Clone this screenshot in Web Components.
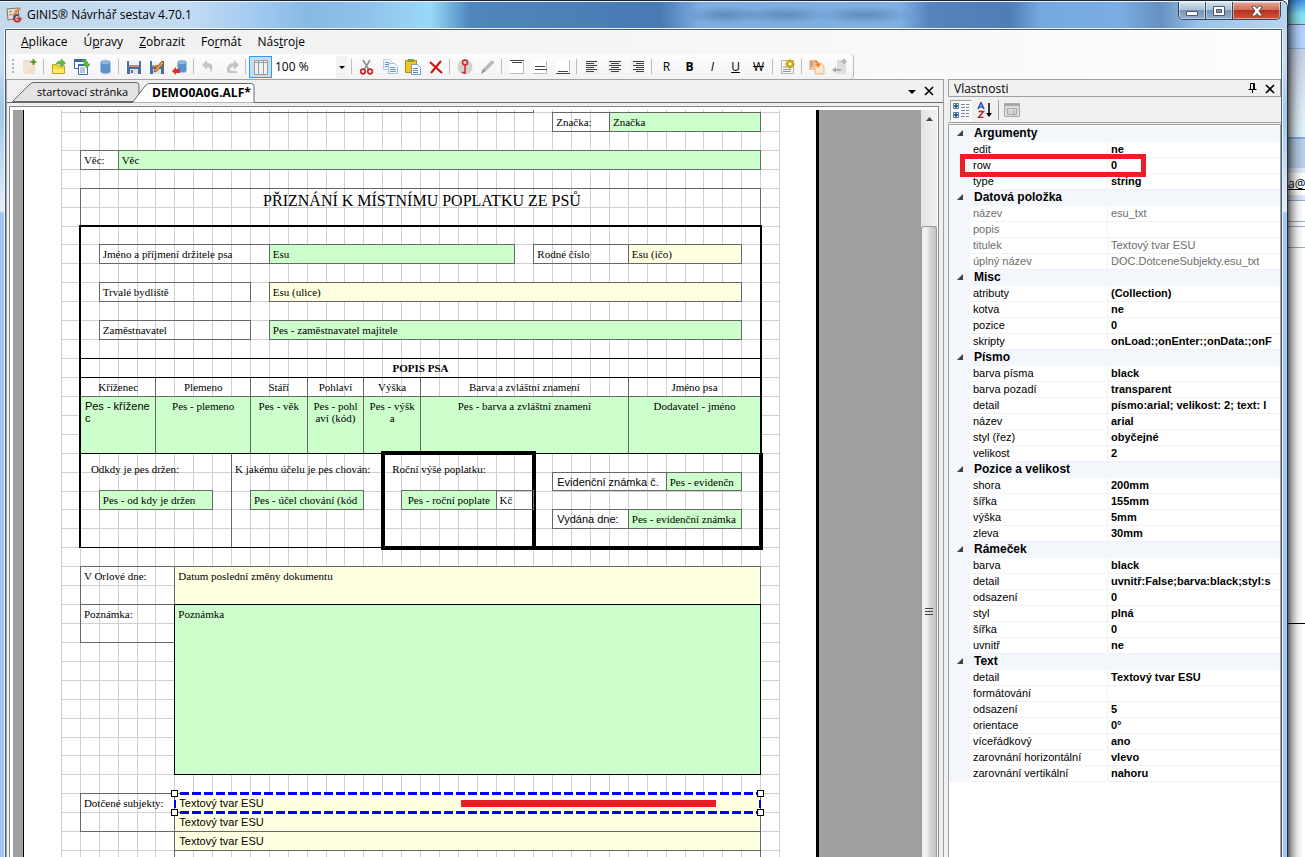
<!DOCTYPE html>
<html lang="cs">
<head>
<meta charset="utf-8">
<title>GINIS® Návrhář sestav 4.70.1</title>
<style>
  html, body { margin: 0; height: 100%; overflow: hidden; }
  body { display: flex; background: #fff; color: #000; font: 11px/16px "Open Sans", "Noto Sans", sans-serif; }
</style>
</head>
<body>
<app-window caption="GINIS® Návrhář sestav 4.70.1">
  <menu-bar slot="menu"></menu-bar>
  <tool-bar slot="tools"></tool-bar>
  <editor-pane>
    <report-page>
      <report-field at="1 -1 5 0" class="cut"></report-field>
      <report-field at="5 -1 25 0" class="cut"></report-field>
      <report-field at="26 0 29 1">Značka:</report-field>
      <report-field at="29 0 37 1" class="green">Značka</report-field>
      <report-field at="1 2 3 3">Věc:</report-field>
      <report-field at="3 2 37 3" class="green">Věc</report-field>
      <report-field at="1 4 37 6" class="heading">PŘIZNÁNÍ K MÍSTNÍMU POPLATKU ZE PSŮ</report-field>
      <report-field at="2 7 11 8">Jméno a příjmení držitele psa</report-field>
      <report-field at="11 7 24 8" class="green">Esu</report-field>
      <report-field at="25 7 30 8">Rodné číslo</report-field>
      <report-field at="30 7 36 8" class="yellow">Esu (ičo)</report-field>
      <report-field at="2 9 10 10">Trvalé bydliště</report-field>
      <report-field at="11 9 36 10" class="yellow">Esu (ulice)</report-field>
      <report-field at="2 11 10 12">Zaměstnavatel</report-field>
      <report-field at="11 11 36 12" class="green">Pes - zaměstnavatel majitele</report-field>

      <report-field at="1 14 5 15" class="center">Kříženec</report-field>
      <report-field at="5 14 10 15" class="center">Plemeno</report-field>
      <report-field at="10 14 13 15" class="center">Stáří</report-field>
      <report-field at="13 14 16 15" class="center">Pohlaví</report-field>
      <report-field at="16 14 19 15" class="center">Výška</report-field>
      <report-field at="19 14 30 15" class="center">Barva a zvláštní znamení</report-field>
      <report-field at="30 14 37 15" class="center">Jméno psa</report-field>
      <report-field at="1 15 5 18" class="green sans">Pes - křížene<br>c</report-field>
      <report-field at="5 15 10 18" class="green center">Pes - plemeno</report-field>
      <report-field at="10 15 13 18" class="green center">Pes - věk</report-field>
      <report-field at="13 15 16 18" class="green center">Pes - pohl<br>aví (kód)</report-field>
      <report-field at="16 15 19 18" class="green center">Pes - výšk<br>a</report-field>
      <report-field at="19 15 30 18" class="green center">Pes - barva a zvláštní znamení</report-field>
      <report-field at="30 15 37 18" class="green center">Dodavatel - jméno</report-field>
      <report-field at="1 13 37 14" class="black center bold">POPIS PSA</report-field>

      <report-field at="1 18 9 23" class="inset">Odkdy je pes držen:</report-field>
      <report-field at="9 18 17 23" class="drop">K jakému účelu je pes chován:</report-field>
      <report-field at="2 20 8 21" class="green">Pes - od kdy je držen</report-field>
      <report-field at="10 20 16 21" class="green">Pes - účel chování (kód</report-field>
      <report-field at="1 6 37 23" class="frame"></report-field>
      <report-field at="1 18 37 23" class="black"></report-field>
      <report-field at="25 18 37 23" class="thick open"></report-field>
      <report-field at="17 18 25 23" class="thick note">Roční výše poplatku:</report-field>
      <report-field at="18 20 23 21" class="green center">Pes - roční poplate</report-field>
      <report-field at="23 20 25 21">Kč</report-field>
      <report-field at="26 19 32 20" class="sans">Evidenční známka č.</report-field>
      <report-field at="32 19 36 20" class="green">Pes - evidenčn</report-field>
      <report-field at="26 21 30 22" class="sans">Vydána dne:</report-field>
      <report-field at="30 21 36 22" class="green">Pes - evidenční známka</report-field>

      <report-field at="1 24 6 26">V Orlové dne:</report-field>
      <report-field at="6 24 37 26" class="yellow">Datum poslední změny dokumentu</report-field>
      <report-field at="1 26 6 28">Poznámka:</report-field>
      <report-field at="6 26 37 35" class="green black">Poznámka</report-field>
      <report-field at="1 36 6 38">Dotčené subjekty:</report-field>
      <report-field at="6 37 37 38" class="yellow sans">Textový tvar ESU</report-field>
      <report-field at="6 38 37 39" class="yellow sans">Textový tvar ESU</report-field>
      <report-field at="6 39 37 40"></report-field>
      <report-field at="6 36 37 37" class="yellow sans" selected>Textový tvar ESU</report-field>
    </report-page>
  </editor-pane>
  <property-panel slot="side"></property-panel>
</app-window>
<back-window></back-window>

<script>
const svg = (body, w = 16, h = 16) =>
  `<svg width="${w}" height="${h}" viewBox="0 0 ${w} ${h}" aria-hidden="true">${body}</svg>`;

const sheet = (x, y, c = '#fff', s = '#8fa6c4') =>
  `<path d="M${x}.5 ${y}.5h6l3 3v7h-9z" fill="${c}" stroke="${s}"/>`;
const lines = (list, colour = '#444') =>
  list.map(([x, y, w, h = 1]) => `<rect x="${x}" y="${y}" width="${w}" height="${h}" fill="${colour}"/>`).join('');

const ICONS = {
  create: `<path d="M1 2h9l3 3v10H1z" fill="#f5e6d6"/><path d="M1 15l12-10v10z" fill="#f1dfc6"/><path d="M1 2h9" stroke="#c9c9c9"/><path d="M11.500 0v6M8.500 3h6" stroke="#a89a1c" stroke-width="2"/><path d="M11.500 1v4M9.500 3h4" stroke="#3f9c2c" stroke-width="1.500"/>`,
  open: `<path d="M1.500 14.500v-9h4l1.500 1.500h6.500v7.500z" fill="#f3d934" stroke="#c0a016"/><path d="M2 10h11v4H2z" fill="#fbec6c"/><path d="M5 5q2-4 5-2.500V0l4.500 4L10 8V5.500Q7 4.500 5 5z" fill="#5cc142" stroke="#3a8f28" stroke-width=".5"/>`,
  forms: `<path d="M.5 .5h11v9H.5z" fill="#fff" stroke="#4566a5"/><path d="M0 0h12v3H0z" fill="#3b66b0"/><path d="M4.500 5.500h9v10h-9z" fill="#fff" stroke="#4566a5"/><path d="M4 5h10v2H4z" fill="#3b66b0"/><path d="M6 9h5M6 11h5M6 13h5" stroke="#6d8cc4"/><path d="M8 1q5-1 6 4h2l-3 4-4-4h2q-1-2-3-3z" fill="#56b83e" stroke="#2d8a1e" stroke-width=".5"/>`,
  database: `<path d="M3.500 3.500c0-3 10-3 10 0v9c0 3-10 3-10 0z" fill="#5b93cb" stroke="#a9c4df"/><ellipse cx="8.500" cy="3.500" rx="4.500" ry="1.800" fill="#8bb6df"/>`,
  save: `<path d="M1 2h14v13H1z" fill="#456fa8"/><path d="M3 2h10v6H3z" fill="#eef1f5"/><path d="M3 6h10v2H3z" fill="#d6836c"/><path d="M4 10h8v5H4z" fill="#dfe3ea"/><path d="M5 11h2v3H5z" fill="#5c7393"/>`,
  saveas: `<path d="M1 2h14v13H1z" fill="#456fa8"/><path d="M3 2h10v6H3z" fill="#eef1f5"/><path d="M3 6h10v2H3z" fill="#d6836c"/><path d="M4 10h8v5H4z" fill="#dfe3ea"/><path d="M5 13l1-3 7-8 2 2-7 8z" fill="#e99f3b" stroke="#6b4516" stroke-width=".7"/>`,
  dbsave: `<path d="M5.500 3.500c0-3 9-3 9 0v8c0 3-9 3-9 0z" fill="#5b93cb" stroke="#a9c4df"/><ellipse cx="10" cy="3.500" rx="4" ry="1.800" fill="#8bb6df"/><path d="M0 12l4-4v2h4v4H4v2z" fill="#e03030"/>`,
  undo: `<path d="M1 6l5-5v3c6 0 7 5 3 10 1-4 0-6-3-6v3z" fill="#c4c4c4"/>`,
  redo: `<path d="M15 6l-5-5v3C4 4 1 9 4 14h9v-2H7c-2-3 0-4 3-4v3z" fill="#c4c4c4"/>`,
  grid: `<path d="M1.500 1.500h13v14h-13z" fill="#f2f2f2" stroke="#9a9a9a"/><path d="M5.500 1v14M10.500 1v14M1 3.500h14" stroke="#9a9a9a"/>`,
  cut: `<path d="M4 1l6 10M11 1L5 11" stroke="#8b8b8b" stroke-width="1.500"/><circle cx="4" cy="12.500" r="2.300" fill="none" stroke="#d42020" stroke-width="1.700"/><circle cx="11" cy="12.500" r="2.300" fill="none" stroke="#d42020" stroke-width="1.700"/>`,
  copy: sheet(1, 0, '#f3f6fa', '#c2ccd8') + sheet(6, 4, '#f3f6fa', '#a9bfd6') + lines([[3, 3, 4], [3, 5, 4], [3, 7, 3], [8, 8, 5], [8, 10, 6], [8, 12, 6]], '#5e93cb'),
  paste: `<path d="M.5 1.500h11v12H.5z" fill="#f2c51f" stroke="#b58a16"/><path d="M3 0h6v3H3z" fill="#7ba646"/>` + sheet(6, 5, '#fff', '#7f9cc4') + lines([[8, 9, 5], [8, 11, 5], [8, 13, 5]], '#5e83b8'),
  remove: `<path d="M2 3l12 11M13 2L3 14" stroke="#d00c0c" stroke-width="2"/>`,
  key: `<circle cx="8" cy="8" r="7.500" fill="#d2d3cc"/><circle cx="8" cy="3.500" r="2.500" fill="none" stroke="#dc1f2a" stroke-width="1.500"/><path d="M8 6v9M8 13.500h-3" stroke="#dc1f2a" stroke-width="1.500"/>`,
  pencil: `<path d="M1 15l2-5 9-9 2.500 2.500-9 9z" fill="#b9b9b9"/><path d="M1 15l2-5 2 2z" fill="#8a8a8a"/>`,
  top: `<path d="M1 1h14v14H1z" fill="#fff"/><path d="M1 14.500h13.500V3" fill="none" stroke="#bbb"/>` + lines([[1, 1, 14], [3, 3, 10]]),
  middle: `<path d="M1 1h14v14H1z" fill="#fff"/><path d="M1 14.500h13.500V2" fill="none" stroke="#bbb"/>` + lines([[3, 7, 10], [3, 10, 12]]),
  bottom: `<path d="M1 1h14v14H1z" fill="#fff"/><path d="M14.500 1v13" fill="none" stroke="#bbb"/>` + lines([[3, 12, 10], [1, 14, 14]]),
  left: `<path d="M1 1h14v14H1z" fill="#f0f0f0"/>` + lines([[2, 2, 11], [2, 4, 8], [2, 6, 11], [2, 8, 8], [2, 10, 11], [2, 12, 8]]),
  centre: `<path d="M1 1h14v14H1z" fill="#f0f0f0"/>` + lines([[2, 2, 12], [4, 4, 8], [2, 6, 12], [4, 8, 8], [2, 10, 12], [4, 12, 8]]),
  right: `<path d="M1 1h14v14H1z" fill="#f0f0f0"/>` + lines([[3, 2, 11], [6, 4, 8], [3, 6, 11], [6, 8, 8], [3, 10, 11], [6, 12, 8]]),
  settings: `<path d="M1.500 1.500h12v13h-12z" fill="#f7f7f7" stroke="#b5b5b5"/><path d="M3 8h4M3 10.500h8M3 12.500h8" stroke="#8a9ab0"/><circle cx="10" cy="5" r="3" fill="#fff" stroke="#cfa90c" stroke-width="2.500"/><path d="M10 0v10M5 5h10M6.500 1.500l7 7M13.500 1.500l-7 7" stroke="#cfa90c"/><circle cx="10" cy="5" r="1.500" fill="#fff"/>`,
  importIcon: `<path d="M0 1h8v10H0z" fill="#f0c39c"/><path d="M1 3h3M1 5h3M1 7h3" stroke="#a9836a"/><path d="M6 4h6l3 3v8H6z" fill="#fbe5cf" stroke="#e5b98d"/><path d="M4 2q5-2 6 3h2L9 9 6 5h2Q7 3 4 2z" fill="#f08a22"/>`,
  exportIcon: `<path d="M5 1h7l2 3v11H5z" fill="#dedede"/><path d="M12 0v5M9.500 2.500h5" stroke="#b5b5b5" stroke-width="2"/><path d="M0 11l4-3v2h5v2H4v2z" fill="#aaa"/>`,
  app: `<path d="M1 2l11-1 1 10-11 2z" fill="#e9e2d2" stroke="#7b7260"/><path d="M3 5l3-.5M3 8l3-.5M8 4l3-.5" stroke="#8b8269"/><path d="M14 1L7 9" stroke="#e0853a" stroke-width="2"/><path d="M13 8.500c-5-2-7 5-2.500 6 2 .5 4-1 4-3h-3" fill="none" stroke="#d42a2a" stroke-width="2"/><path d="M12 8c-3 0-4 2-4 4" fill="none" stroke="#2b4fb0" stroke-width="1.500"/>`
};

const define = (name, css, html, ready) => {
  customElements.define(name, class extends HTMLElement {
    constructor() {
      super();
      this.attachShadow({ mode: 'open' }).innerHTML =
        `<style>*{box-sizing:border-box}button{margin:0;padding:0;border:0;background:none;color:inherit;font:inherit}svg{display:block}${css}</style>` + html;
    }
    connectedCallback() { if (ready) ready(this, this.shadowRoot); }
  });
};

/* Window frame: glass border, caption, client area */
define('app-window', `
  :host { display: flex; flex-direction: column; flex: 1; min-width: 0; height: 100vh; box-sizing: border-box;
    border-top: 1px solid #1b2433; border-right: 1px solid #26303d; border-top-right-radius: 7px; overflow: hidden;
    background: linear-gradient(#bcd6ee 0, #c9def2 60px, #a3c6ec 110px, #e4eef8 210px, #a3c8f0 212px, #a3c8f0 100%); }
  header { display: flex; height: 28px; flex: none; padding: 0 6px 0 6px; border-top: 1px solid #e8f3fc;
    background:
      radial-gradient(ellipse 40px 9px at 725px 13px, #45688f80, #0000),
      radial-gradient(ellipse 45px 9px at 785px 13px, #45688f80, #0000),
      radial-gradient(ellipse 50px 9px at 865px 13px, #45688f80, #0000),
      linear-gradient(90deg, #c4d9ec 0, #c3dbf2 190px, #9fc8f0 260px, #86b9e4 310px, #8fc3ec 370px, #9ad9f8 430px, #4f86bd 470px, #487ab4 660px, #7dade0 700px, #7fb0e2 900px, #5583bb 930px, #4f7db6 1010px, #74a9df 1040px, #7aaee2 1120px, #6690bf 1160px, #9cc3ea 1200px, #b8d5f0 100%); }
  header > svg { margin-top: 5px; }
  h1 { flex: 1; margin: 0; padding: 4px 0 0 5px; font: inherit; font-size: 12px; line-height: 18px; }
  .caps { display: flex; height: 18px; border: 1px solid #34475c; border-top: 0; border-radius: 0 0 5px 5px; overflow: hidden; }
  .caps button { width: 27px; display: grid; place-items: center; border-right: 1px solid #34475c;
    background: linear-gradient(#d3e1ee 0, #a9bfd6 48%, #7896b6 50%, #93afcd 100%); box-shadow: inset 0 0 0 1px #ffffff70; }
  .caps .close { width: 47px; border: 0; background: linear-gradient(#e5a596 0, #d0705c 46%, #b53220 50%, #d0573b 100%); }
  .client { flex: 1; min-height: 0; display: flex; flex-direction: column; margin: 0 5px;
    border: 1px solid #4c5d70; border-bottom: 0; outline: 1px solid #eaf3fb; background: #f0f0f0; }
  .top { background: linear-gradient(90deg, #efefef, #fdfdfd); }
  main { flex: 1; min-height: 0; display: grid; grid-template-columns: minmax(0, 1fr) 333px; grid-template-rows: minmax(0, 1fr); gap: 4px; }
`, `
  <header>${svg(ICONS.app)}<h1></h1>
    <div class="caps">
      <button aria-label="Minimalizovat">${svg('<path d="M2.500 8.500h11v4h-11z" fill="#fff" stroke="#4a5867"/>')}</button>
      <button aria-label="Maximalizovat">${svg('<path d="M2.500 3.500h11v9h-11z" fill="#fff" stroke="#4a5867"/><path d="M5.500 6.500h5v3h-5z" fill="#7d9bbb" stroke="#4a5867"/>')}</button>
      <button class="close" aria-label="Zavřít">${svg('<path d="M3 3h3l2 2.500L10 3h3v1L10 8l3 4v1h-3l-2-2.500L6 13H3v-1l3-4-3-4z" fill="#fff" stroke="#5c4a50"/>')}</button>
    </div>
  </header>
  <div class="client">
    <div class="top"><slot name="menu"></slot><slot name="tools"></slot></div>
    <main><slot></slot><slot name="side"></slot></main>
  </div>
`, (el, root) => { root.querySelector('h1').textContent = el.getAttribute('caption'); });

define('menu-bar', `
  :host { display: block; }
  nav { display: flex; gap: 16px; height: 24px; padding: 0 15px; align-items: center; font-size: 12px; }
`, `<nav>
  <button><u>A</u>plikace</button><button>Ú<u>p</u>ravy</button><button><u>Z</u>obrazit</button><button>Fo<u>r</u>mát</button><button>Nás<u>t</u>roje</button>
</nav>`);

const TOOLS = [
  ['create', 'Nový'], '|', ['open', 'Otevřít'], ['forms', 'Formuláře'], ['database', 'Databáze'], '|',
  ['save', 'Uložit'], ['saveas', 'Uložit jako'], ['dbsave', 'Uložit do databáze'], '|',
  ['undo', 'Zpět'], ['redo', 'Znovu'], '|', ['grid', 'Mřížka', 'on'], 'zoom', '|',
  ['cut', 'Vyjmout'], ['copy', 'Kopírovat'], ['paste', 'Vložit'], ['remove', 'Odstranit'], '|',
  ['key', 'Klíč'], ['pencil', 'Upravit'], '|', ['top', 'Nahoru'], ['middle', 'Doprostřed'], ['bottom', 'Dolů'], '|',
  ['left', 'Vlevo'], ['centre', 'Na střed'], ['right', 'Vpravo'], '|',
  'R', 'B', 'I', 'U', 'W', '|', ['settings', 'Nastavení'], '|', ['importIcon', 'Import'], ['exportIcon', 'Export']
];
define('tool-bar', `
  :host { display: flex; }
  .bar { display: flex; align-items: center; height: 25px; margin-left: 3px; padding: 0 2px 0 9px; position: relative;
    border-right: 1px solid #b9b9b9; border-radius: 0 4px 4px 0; background: linear-gradient(#fdfdfd, #f3f3f3); }
  .bar::before { content: ""; position: absolute; left: 3px; top: 5px; width: 2px; height: 15px;
    background: repeating-linear-gradient(#b0b0b0 0 2px, #0000 2px 4px); }
  .bar button { width: 23px; height: 22px; display: grid; place-items: center; font-size: 12px; }
  .on { background: #c3ddf8; border: 1px solid #3399ff !important; }
  i.sep { width: 6px; height: 15px; background: linear-gradient(90deg, #0000 2px, #bdbdbd 2px 3px, #0000 3px); }
  .bar .B { font-weight: 700; } .bar .I { font-style: italic; } .bar .U { text-decoration: underline; } .bar .W { text-decoration: line-through; }
  label { position: relative; width: 77px; height: 22px; }
  select { appearance: none; width: 75px; height: 22px; border: 0; margin: 0; padding: 0 14px 0 3px; background: #fff; font: inherit; font-size: 12px; color: inherit; }
  label svg { position: absolute; right: 2px; top: 0; background: #f3f3f3; }
`, `<div class="bar" role="toolbar">${TOOLS.map(t =>
  t === '|' ? '<i class="sep"></i>' :
  t === 'zoom' ? `<label><select aria-label="Měřítko"><option>100 %</option></select>${svg('<path d="M3 10h6l-3 3z"/>', 11, 22)}</label>` :
  typeof t === 'string' ? `<button class="${t}">${t}</button>` :
  `<button class="${t[2] || ''}" aria-label="${t[1]}">${svg(ICONS[t[0]])}</button>`).join('')}</div>`);

/* Document tabs, scrolled viewport and scrollbar */
define('editor-pane', `
  :host { display: flex; flex-direction: column; min-width: 0; min-height: 0; border: 1px solid #a0a0a0; border-bottom: 0; background: #f0f0f0; }
  .tabs { display: flex; align-items: flex-end; height: 23px; flex: none; padding-left: 5px; border-bottom: 1px solid #696969; }
  .tabs button { position: relative; height: 20px; flex: none; text-align: left; }
  .tabs svg.edge { position: absolute; left: 0; top: 0; }
  .tabs span { position: relative; line-height: 18px; }
  .first { width: 128px; padding-left: 25px; }
  .active { width: 123px; padding-left: 20px; margin: 0 0 -1px -8px; font-weight: 700; }
  .tabs .active { font-size: 12px; font-weight: 700; }
  .ctl { display: flex; margin-left: auto; padding-right: 5px; }
  .ctl button { width: 17px; }
  .doc { flex: 1; min-height: 0; display: flex; margin: 3px 4px 0 2px; padding: 3px 1px 0 3px; border: 1px solid #828790; border-bottom: 0; background: #fff; }
  .view { flex: 1; min-width: 0; overflow: hidden; background: #a0a0a0; padding-left: 10px; }
  .scroll { width: 16px; flex: none; display: flex; flex-direction: column; background: linear-gradient(90deg, #e3e3e3, #f2f2f2); }
  .scroll .up { height: 17px; padding-left: 4px; }
  .thumb { flex: 1; margin-top: 99px; border: 1px solid #979797; border-bottom: 0; border-radius: 3px 3px 0 0;
    background: linear-gradient(90deg, #f5f5f5 0, #e9e9eb 45%, #d9dadc 50%, #c1c2c4 100%); display: grid; place-items: center; }
  .thumb svg { margin-top: 140px; }
`, `
  <div class="tabs">
    <button class="first"><svg class="edge" width="128" height="20" viewBox="0 0 128 20"><path d="M.5 19.500L17 3Q19 .5 22 .5h102q3 0 3 3v16z" fill="#e3e3e3" stroke="#696969"/></svg><span>startovací stránka</span></button>
    <button class="active"><svg class="edge" width="123" height="20" viewBox="0 0 123 20"><path d="M.5 19.500L13 3Q15 .5 18 .5h101q3 0 3 3v16z" fill="#fff"/><path d="M.5 19.500L13 3Q15 .5 18 .5h101q3 0 3 3v16" fill="none" stroke="#696969"/></svg><span>DEMO0A0G.ALF*</span></button>
    <div class="ctl">
      <button aria-label="Seznam dokumentů">${svg('<path d="M4 8h8l-4 4z"/>', 16, 20)}</button>
      <button aria-label="Zavřít dokument">${svg('<path d="M4 5l8 8M12 5l-8 8" stroke="#000" stroke-width="1.600"/>', 16, 20)}</button>
    </div>
  </div>
  <div class="doc">
    <div class="view"><slot></slot></div>
    <div class="scroll">
      <div class="up">${svg('<path d="M1 11l3.500-4L8 11z" fill="#444"/>', 9, 17)}</div>
      <div class="thumb">${svg('<path d="M0 .5h8M0 3.500h8M0 6.500h8" stroke="#444"/>', 8, 8)}</div>
    </div>
  </div>
`);

/* Paper with a 5 mm snapping grid: 38 columns, 40 rows below a clipped one */
const COLS = 38, ROWS = 40, GW = 718, GH = 757;
define('report-page', `
  :host { display: block; box-sizing: border-box; width: 796px; padding-left: 37px; border: solid #000; border-width: 0 3px 0 1px; background: #fff; }
  .area { position: relative; width: ${GW}px; display: grid; grid-template-columns: repeat(${COLS}, minmax(0, 1fr));
    grid-template-rows: 2px repeat(${ROWS}, minmax(0, 1fr)); height: ${GH + 2}px; }
  .mesh { position: absolute; left: 0; top: 0; fill: #d0d0d0; }
`, `<div class="area"><svg class="mesh" width="${GW + 1}" height="${GH + 2}">${
  Array.from({ length: COLS + 1 }, (_, i) => `<rect x="${Math.round(i * GW / COLS)}" y="0" width="1" height="${GH + 2}"/>`).join('')}${
  Array.from({ length: ROWS }, (_, i) => `<rect x="0" y="${2 + Math.round(i * GH / ROWS)}" width="${GW + 1}" height="1"/>`).join('')
}</svg><slot></slot></div>`);

define('report-field', `
  :host { position: relative; display: block; box-sizing: border-box; min-width: 0; margin: 0 -1px -1px 0; padding: 3px 0 0 3px;
    border: 1px solid #686868; font: 11px/12px "Liberation Serif", serif; white-space: nowrap; }
  :host(.green) { background: #ccffcc; }
  :host(.yellow) { background: #ffffe1; }
  :host(.sans) { font-family: "Liberation Sans", sans-serif; padding-left: 4px; }
  :host(.center) { text-align: center; padding-left: 0; }
  :host(.bold) { font-weight: 700; }
  :host(.heading) { font-size: 16px; line-height: 18px; text-align: center; }
  :host(.black) { border-color: #000; }
  :host(.cut) { border-top: 0; padding: 0; }
  :host(.inset) { padding: 9px 0 0 10px; }
  :host(.drop) { padding-top: 9px; }
  :host(.frame) { border: 2px solid #000; margin: -1px -2px -1px -1px; border-bottom-width: 1px; }
  :host(.thick) { border: 4px solid #000; margin: -2px -3px -3px -1px; }
  :host(.note) { padding: 8px 0 0 7px; }
  :host(.open) { border-left-width: 0; border-top-width: 1px; margin: 0 -3px -3px 0; }
  .sel { position: absolute; inset: -4px; }
  .sel b { position: absolute; background: repeating-linear-gradient(90deg, #0000ff 0 9px, #ffffe1 9px 12px); left: 9px; right: 7px; height: 3px; }
  .sel b:nth-child(1) { top: 2px; } .sel b:nth-child(2) { bottom: 2px; }
  .sel u { position: absolute; top: 10px; bottom: 8px; width: 2px; background: #0000ff; }
  .sel u:nth-of-type(1) { left: 3px; } .sel u:nth-of-type(2) { right: 3px; }
  .sel i { position: absolute; width: 7px; height: 7px; border: 1px solid #000; background: #fff; }
  .sel i:nth-of-type(odd) { left: 0; } .sel i:nth-of-type(even) { right: 0; }
  .sel i:nth-of-type(-n+2) { top: 0; } .sel i:nth-of-type(n+3) { bottom: 0; }
  .mark { position: absolute; right: 44px; top: 6px; width: 255px; height: 7px; background: #ee1c24; }
`, `<slot></slot>`, (el, root) => {
  const [c1, r1, c2, r2] = el.getAttribute('at').split(' ').map(Number);
  el.style.gridArea = `${r1 + 2} / ${c1 + 1} / ${r2 + 2} / ${c2 + 1}`;
  if (el.hasAttribute('selected') && !root.querySelector('.sel'))
    root.innerHTML += '<div class="sel"><b></b><b></b><u></u><u></u><i></i><i></i><i></i><i></i></div><div class="mark"></div>';
});

const PROPS = [
  ['Argumenty', [['edit', 'ne'], ['row', '0'], ['type', 'string']]],
  ['Datová položka', [['název', 'esu_txt'], ['popis', ''], ['titulek', 'Textový tvar ESU'], ['úplný název', 'DOC.DotceneSubjekty.esu_txt']], 'ro'],
  ['Misc', [['atributy', '(Collection)'], ['kotva', 'ne'], ['pozice', '0'], ['skripty', 'onLoad:;onEnter:;onData:;onF']]],
  ['Písmo', [['barva písma', 'black'], ['barva pozadí', 'transparent'], ['detail', 'písmo:arial; velikost: 2; text: l'], ['název', 'arial'], ['styl (řez)', 'obyčejné'], ['velikost', '2']]],
  ['Pozice a velikost', [['shora', '200mm'], ['šířka', '155mm'], ['výška', '5mm'], ['zleva', '30mm']]],
  ['Rámeček', [['barva', 'black'], ['detail', 'uvnitř:False;barva:black;styl:s'], ['odsazení', '0'], ['styl', 'plná'], ['šířka', '0'], ['uvnitř', 'ne']]],
  ['Text', [['detail', 'Textový tvar ESU'], ['formátování', ''], ['odsazení', '5'], ['orientace', '0°'], ['víceřádkový', 'ano'], ['zarovnání horizontální', 'vlevo'], ['zarovnání vertikální', 'nahoru']]]
];
define('property-panel', `
  :host { display: flex; flex-direction: column; min-height: 0; }
  header { display: flex; flex: none; height: 18px; border: 1px solid #a0a0a0; padding: 0 1px 0 5px; }
  h2 { flex: 1; margin: 0; font: inherit; font-size: 12px; line-height: 17px; }
  header button { width: 17px; }
  .tools { display: flex; flex: none; align-items: center; height: 26px; padding: 1px 2px 0; gap: 2px; border-bottom: 1px solid #a0a0a0; }
  .tools button { width: 22px; height: 21px; display: grid; place-items: center; }
  .tools .on { border: 1px solid #a0a0a0; border-right-color: #fff; border-bottom-color: #fff; background: #f7f7f7; }
  .tools i { width: 1px; height: 20px; background: #a0a0a0; }
  .list { position: relative; flex: 1; min-height: 0; margin-top: 1px; padding-top: 1px; overflow: hidden; border: 1px solid #a0a0a0; border-bottom: 0; background: #fff; }
  table { width: 100%; table-layout: fixed; border-collapse: separate; border-spacing: 0; font: 11px/15px "Liberation Sans", sans-serif; }
  td, th { height: 16px; padding: 0 0 0 3px; text-align: left; font-weight: 400; white-space: nowrap; overflow: hidden; border-bottom: 1px solid #f0f4fa; }
  td { font-weight: 700; border-left: 1px solid #f0f4fa; }
  td.g, .cat th { background: #f3f6fb; border-color: #f3f6fb; }
  td.g { padding: 0 0 0 7px; }
  .cat th { font-weight: 700; font-size: 12px; padding-left: 4px; }
  .ro th, .ro td { color: #6d6d6d; font-weight: 400; }
  .ring { position: absolute; left: 11px; top: 29px; width: 186px; height: 23px; border: 5px solid #ee1c24; }
`, `
  <header><h2>Vlastnosti</h2>
    <button aria-label="Připnout">${svg('<path d="M5.500 3.500h4v6h-4zM8.500 3v6M3.500 9.500h8M7.500 9v4" fill="none" stroke="#000"/>')}</button>
    <button aria-label="Zavřít">${svg('<path d="M4 5l8 8M12 5l-8 8" stroke="#000" stroke-width="1.600"/>')}</button>
  </header>
  <div class="tools">
    <button class="on" aria-label="Podle kategorií">${svg('<path d="M.5 1.500h5v5h-5zM.5 10.500h5v5h-5z" fill="#fff" stroke="#3b7fc4"/><path d="M1 4h4M3 2v4M1 13h4M3 11v4" stroke="#000"/><path d="M8 2.500h4M13 2.500h3M8 5.500h4M13 5.500h3M8 8.500h4M13 8.500h3M8 11.500h4M13 11.500h3M8 14.500h4M13 14.500h3" stroke="#7d87a8"/>')}</button>
    <button aria-label="Podle abecedy">${svg('<path d="M1 7l3-6.500L7 7M2 5h4" fill="none" stroke="#2c4fb4" stroke-width="1.500"/><path d="M1.500 9.500h5l-5 6h5" fill="none" stroke="#a02a2a" stroke-width="1.500"/><path d="M12 1v11" stroke="#000" stroke-width="1.500"/><path d="M9 11h6l-3 4z"/>')}</button>
    <i></i>
    <button aria-label="Stránky vlastností">${svg('<path d="M.5 1.500h15v13H.5z" fill="#dcdcdc" stroke="#a8a8a8"/><path d="M1 3h14" stroke="#a8a8a8" stroke-width="2"/><path d="M3.500 6.500h9v6h-9zM5 9h1M8 9h3M5 11h1M8 11h3" fill="none" stroke="#aaa"/>')}</button>
  </div>
  <div class="list">
    <table><colgroup><col style="width:21px"><col style="width:137px"><col></colgroup><tbody>${PROPS.map(([cat, rows, ro]) =>
      `<tr class="cat"><td class="g">${svg('<path d="M6 0v6H0z" fill="#404040"/>', 7, 7)}</td><th colspan="2">${cat}</th></tr>` +
      rows.map(([k, v]) => `<tr class="${ro || ''}"><td class="g"></td><th scope="row">${k}</th><td>${v}</td></tr>`).join('')).join('')}</tbody></table>
    <div class="ring"></div>
  </div>
`);

/* Sliver of the mail window that lies behind, shaded by the front window */
define('back-window', `
  :host { display: flex; flex-direction: column; flex: none; width: 17px; height: 100vh; position: relative; overflow: hidden; background: #fff; }
  :host::after { content: ""; position: absolute; inset: 0; background: linear-gradient(90deg, #000000a0, #00000055 4px, #0000001c 9px, #0000 15px); }
  div { flex: none; }
  .glass { height: 25px; background: linear-gradient(#3f8be0, #86e4f5 60%, #8fe0e8); border-bottom: 1px solid #5c7088; }
  .tabs { height: 24px; background: #b4d1fb; border-bottom: 1px solid #8fb0dc; }
  .ribbon { height: 90px; background: linear-gradient(#c3cfe2, #dfeaf6 70%, #e0f4fa); border-bottom: 2px solid #86acd8; }
  .bar { height: 34px; background: #b7cee8; border-bottom: 5px solid #dce8f6; }
  a { flex: none; height: 22px; background: #fff; color: #000; font-size: 12px; line-height: 21px; }
  .box { height: 22px; margin-bottom: 4px; border: 1px solid #98a9c0; border-width: 1px 0; }
  .gap { height: 5px; background: #d9e6f7; }
  .rule { margin-top: 371px; height: 1px; background: #000; }
`, `<div class="glass"></div><div class="tabs"></div><div class="ribbon"></div><div class="bar"></div><a href="#">a@</a>
  <div class="gap"></div><div class="box"></div><div class="box"></div><div class="rule"></div>`);
</script>
</body>
</html>
